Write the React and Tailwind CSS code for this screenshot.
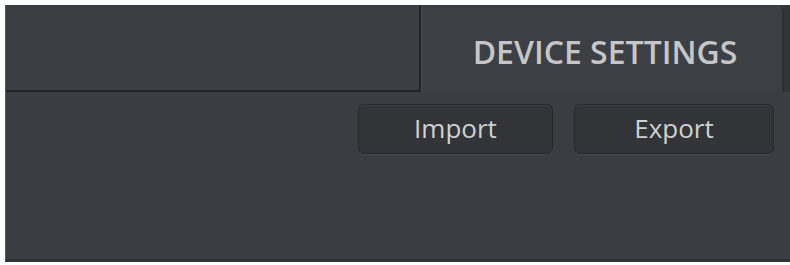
import React from 'react'

const Button = ({ label, className }) => (
  <button
    type="button"
    className={
      'flex h-[50px] items-center justify-center rounded-[6px] border border-[#27292c] bg-[#323437] pb-[2px] text-[26px] text-[#cfd0d1] shadow-[0_1px_1px_#45484c,inset_0_1px_0_#3d4043] ' +
      className
    }
    style={{ fontFamily: '"Open Sans", "DejaVu Sans", sans-serif' }}
  >
    {label}
  </button>
)

const App = () => {
  return (
    <div className="h-[265px] w-[790px] bg-white pl-[5px] pt-[5px] pb-[3px]">
      <div className="flex h-full flex-col border-b-[3px] border-l border-[#2f3134] border-l-[#55585c] bg-[#3a3d41]">
        <div className="flex h-[87px]">
          <div className="w-[415px] border-b-2 border-r-2 border-[#222427] bg-[#3b3e42]" />
          <div
            className="flex flex-1 items-center justify-center rounded-tr-[6px] border-l border-r-2 border-[#2e3033] border-l-[#45484c] bg-[#3c3f43] pl-[6px] pt-[6px] text-[32px] font-semibold text-[#c5c6c7]"
            style={{ fontFamily: '"Open Sans", "DejaVu Sans", sans-serif' }}
          >
            DEVICE SETTINGS
          </div>
          <div className="w-[6px] bg-[#323437]" />
        </div>
        <div className="flex gap-[21px] pl-[352px] pt-[12px]">
          <Button label="Import" className="w-[195px]" />
          <Button label="Export" className="w-[200px]" />
        </div>
      </div>
    </div>
  )
}

export default App
